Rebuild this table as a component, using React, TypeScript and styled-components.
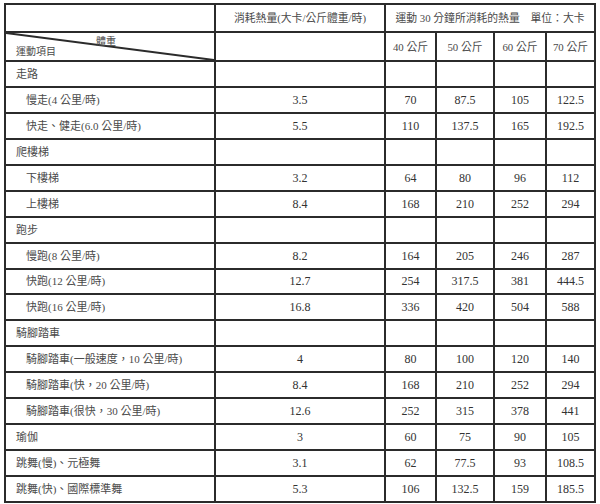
import React from 'react';
import styled, { createGlobalStyle } from 'styled-components';

const GlobalStyle = createGlobalStyle`
  html, body {
    margin: 0;
    padding: 0;
    background: #ffffff;
  }
  body {
    font-family: "Liberation Serif", "Noto Sans CJK TC", serif;
    color: #3a3a3a;
  }
`;

interface RowData {
  label: string;
  kind: 'cat' | 'item';
  rate?: string;
  vals?: string[];
}

const rows: RowData[] = [
  { label: '走路', kind: 'cat' },
  { label: '慢走(4 公里/時)', kind: 'item', rate: '3.5', vals: ['70', '87.5', '105', '122.5'] },
  { label: '快走、健走(6.0 公里/時)', kind: 'item', rate: '5.5', vals: ['110', '137.5', '165', '192.5'] },
  { label: '爬樓梯', kind: 'cat' },
  { label: '下樓梯', kind: 'item', rate: '3.2', vals: ['64', '80', '96', '112'] },
  { label: '上樓梯', kind: 'item', rate: '8.4', vals: ['168', '210', '252', '294'] },
  { label: '跑步', kind: 'cat' },
  { label: '慢跑(8 公里/時)', kind: 'item', rate: '8.2', vals: ['164', '205', '246', '287'] },
  { label: '快跑(12 公里/時)', kind: 'item', rate: '12.7', vals: ['254', '317.5', '381', '444.5'] },
  { label: '快跑(16 公里/時)', kind: 'item', rate: '16.8', vals: ['336', '420', '504', '588'] },
  { label: '騎腳踏車', kind: 'cat' },
  { label: '騎腳踏車(一般速度，10 公里/時)', kind: 'item', rate: '4', vals: ['80', '100', '120', '140'] },
  { label: '騎腳踏車(快，20 公里/時)', kind: 'item', rate: '8.4', vals: ['168', '210', '252', '294'] },
  { label: '騎腳踏車(很快，30 公里/時)', kind: 'item', rate: '12.6', vals: ['252', '315', '378', '441'] },
  { label: '瑜伽', kind: 'cat', rate: '3', vals: ['60', '75', '90', '105'] },
  { label: '跳舞(慢)、元極舞', kind: 'cat', rate: '3.1', vals: ['62', '77.5', '93', '108.5'] },
  { label: '跳舞(快)、國際標準舞', kind: 'cat', rate: '5.3', vals: ['106', '132.5', '159', '185.5'] },
];

const weights = ['40 公斤', '50 公斤', '60 公斤', '70 公斤'];

const Page = styled.div`
  padding: 3px 0 0 4px;
`;

const Table = styled.table`
  border-collapse: collapse;
  table-layout: fixed;
  width: 590px;
  border: 2px solid #1e1e1e;
`;

const Cell = styled.td<{ $align?: 'left' | 'center'; $indent?: number }>`
  border: 2px solid #2b2b2b;
  height: 23.95px;
  padding: 0 0 0 ${p => p.$indent ?? 0}px;
  text-align: ${p => p.$align ?? 'center'};
  vertical-align: middle;
  font-size: 11px;
  line-height: 14px;
  color: #4a4a4a;
  white-space: nowrap;
`;

const NumCell = styled(Cell)`
  font-size: 12px;
  color: #333333;
`;

const HeadCell = styled(Cell)<{ $h: number }>`
  height: ${p => p.$h - 2}px;
  font-size: 10.8px;
`;

const DiagCell = styled.td`
  position: relative;
  border: 2px solid #2b2b2b;
  height: 27px;
  padding: 0;
  font-size: 10px;
  color: #4a4a4a;
`;

const Slash = styled.svg`
  position: absolute;
  left: 0;
  top: 0;
  width: 100%;
  height: 100%;
`;

const DiagTop = styled.span`
  position: absolute;
  left: 90px;
  top: 0;
`;

const DiagBottom = styled.span`
  position: absolute;
  left: 10px;
  bottom: 2px;
`;

export default function App() {
  return (
    <Page>
      <GlobalStyle />
      <Table>
        <colgroup>
          <col style={{ width: 210 }} />
          <col style={{ width: 170 }} />
          <col style={{ width: 51 }} />
          <col style={{ width: 58 }} />
          <col style={{ width: 52 }} />
          <col style={{ width: 49 }} />
        </colgroup>
        <tbody>
          <tr>
            <HeadCell $h={28} />
            <HeadCell $h={28}>消耗熱量(大卡/公斤體重/時)</HeadCell>
            <HeadCell $h={28} colSpan={4}>運動 30 分鐘所消耗的熱量　單位：大卡</HeadCell>
          </tr>
          <tr>
            <DiagCell>
              <Slash viewBox="0 0 100 100" preserveAspectRatio="none">
                <line x1="0" y1="0" x2="100" y2="100" stroke="#2b2b2b" strokeWidth="2" vectorEffect="non-scaling-stroke" />
              </Slash>
              <DiagTop>體重</DiagTop>
              <DiagBottom>運動項目</DiagBottom>
            </DiagCell>
            <HeadCell $h={29} />
            {weights.map(w => (
              <HeadCell $h={29} key={w}>{w}</HeadCell>
            ))}
          </tr>
          {rows.map((r, i) => (
            <tr key={i}>
              <Cell $align="left" $indent={r.kind === 'cat' ? 10 : 20}>{r.label}</Cell>
              <NumCell>{r.rate ?? ''}</NumCell>
              {(r.vals ?? ['', '', '', '']).map((v, j) => (
                <NumCell key={j}>{v}</NumCell>
              ))}
            </tr>
          ))}
        </tbody>
      </Table>
    </Page>
  );
}
